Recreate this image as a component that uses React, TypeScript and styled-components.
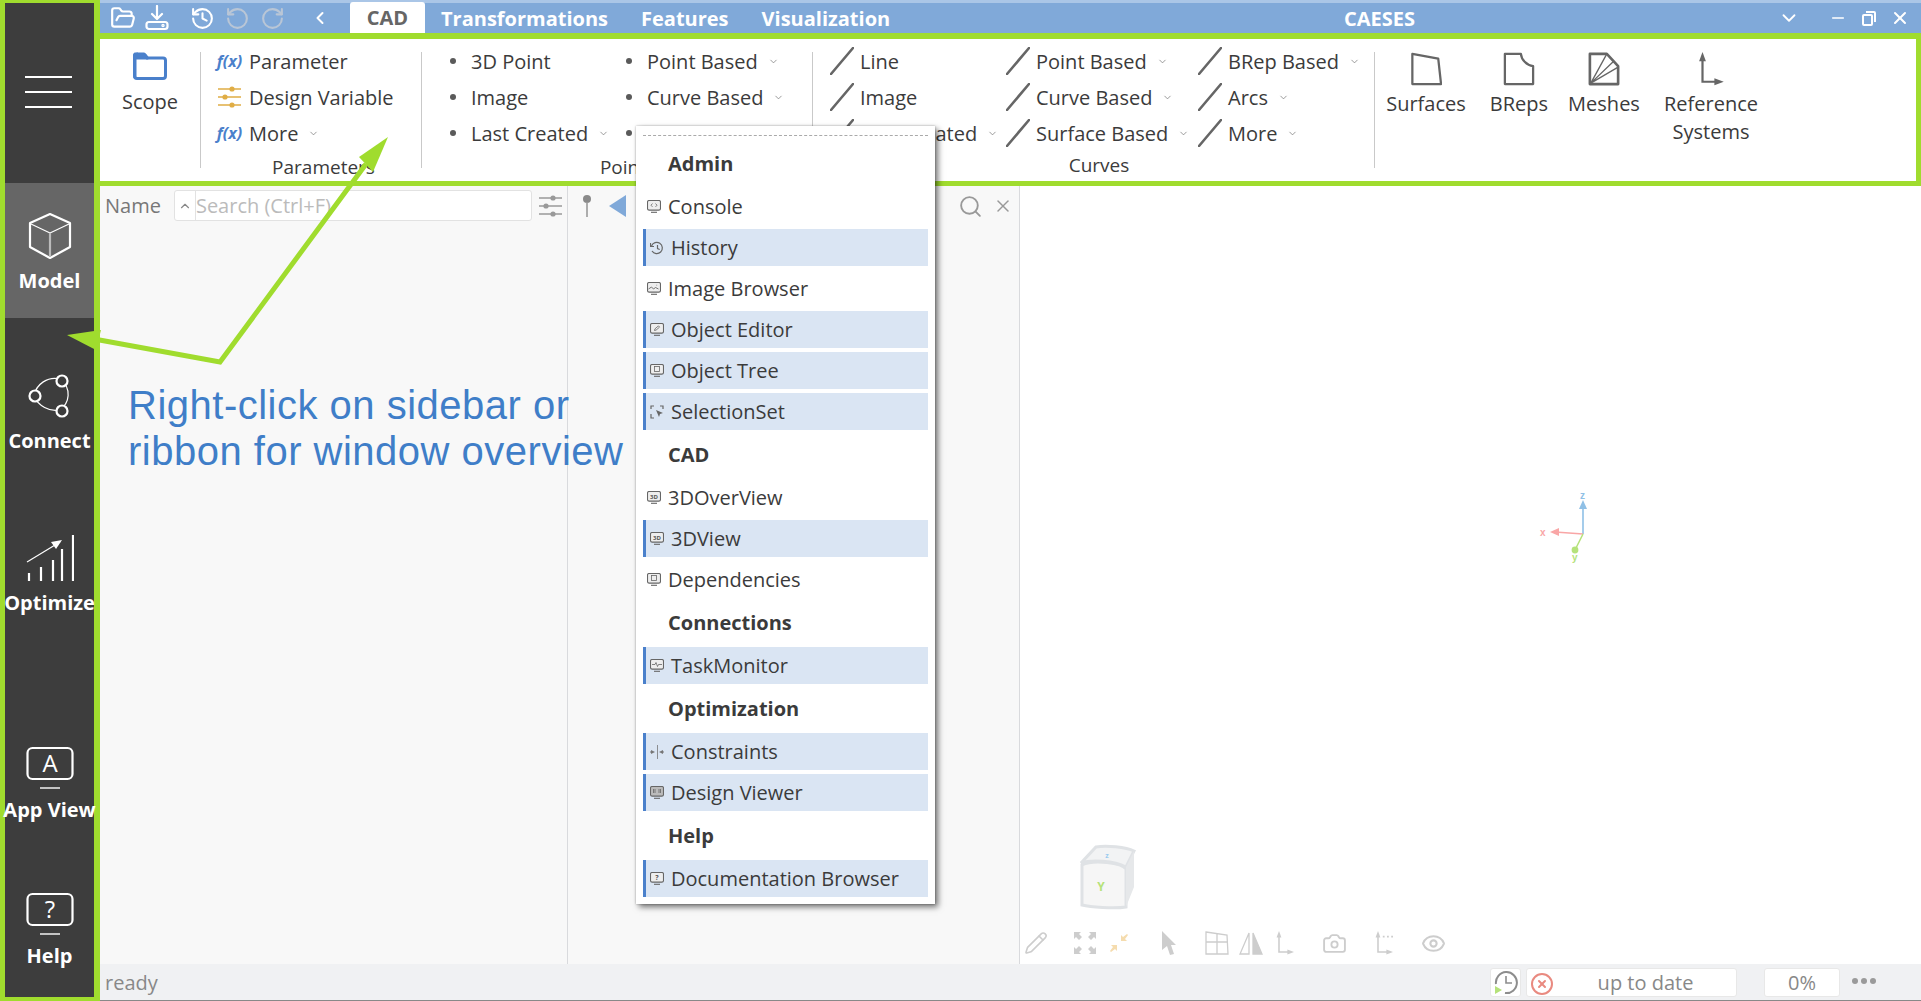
import React from 'react';
import styled, { createGlobalStyle } from 'styled-components';
import { Camera, ChevronDown, ChevronLeft, ChevronUp, CircleX, Eye, FolderOpen, History, Minus, Pencil, RotateCcw, RotateCw, Search, X } from 'lucide-react';

const GREEN = '#a0dc2e';
const BLUE = '#80a9d9';
const ACCENT = '#4a80cb';

const Global = createGlobalStyle`
  html, body { margin: 0; padding: 0; background: #fff; }
  body { font-family: "Open Sans", sans-serif; color: #3b3b3b; }
  * { box-sizing: border-box; }
`;

const Page = styled.div`
  position: relative;
  width: 1921px;
  height: 1001px;
  overflow: hidden;
  display: flex;
`;

const Sidebar = styled.nav`
  flex: 0 0 100px;
  width: 100px;
  min-width: 0;
  height: 1001px;
  background: #3d3d3d;
  border: solid ${GREEN};
  border-width: 3px 6px 4px 5px;
  display: flex;
  flex-direction: column;
`;

const Burger = styled.div`
  height: 180px;
  padding: 73px 0 0 20px;
  display: flex;
  flex-direction: column;
  gap: 13px;
  flex: none;
  & > i {
    display: block;
    width: 47px;
    height: 2px;
    background: #fff;
  }
`;

const NavItem = styled.div<{ $gap: number; $active?: boolean }>`
  display: flex;
  flex-direction: column;
  align-items: center;
  flex: none;
  width: 89px;
  margin-top: ${p => (p.$active ? 0 : p.$gap)}px;
  padding-top: ${p => (p.$active ? p.$gap : 0)}px;
  height: ${p => (p.$active ? '135px' : 'auto')};
  background: ${p => (p.$active ? '#666666' : 'transparent')};
  & > svg { flex: none; }
`;

const NavLabel = styled.div`
  margin-top: 9px;
  height: 24px;
  line-height: 24px;
  font-size: 20px;
  font-weight: 700;
  color: #fff;
  white-space: nowrap;
`;

const Main = styled.div`
  flex: 1;
  min-width: 0;
  display: flex;
  flex-direction: column;
`;

const TitleBar = styled.header`
  flex: 0 0 33px;
  background: ${BLUE};
  border-top: 3px solid #aac6e7;
  display: flex;
  align-items: center;
  color: #fff;
  position: relative;
`;

const QuickIcons = styled.div`
  display: flex;
  align-items: center;
  margin-left: 10px;
  width: 240px;
`;

const QuickSlot = styled.span<{ $left: number; $off?: boolean }>`
  display: flex;
  margin-left: ${p => p.$left}px;
  color: ${p => (p.$off ? '#b9c6d6' : '#fff')};
`;

const Tab = styled.div<{ $active?: boolean; $left: number }>`
  margin-left: ${p => p.$left}px;
  font-size: 20px;
  font-weight: 700;
  white-space: nowrap;
  ${p =>
    p.$active
      ? `background:#fff;color:#666;height:31px;margin-top:-1px;padding:0 10px;border-radius:3px 3px 0 0;line-height:31px;width:75px;text-align:center;`
      : `color:#fff;`}
`;

const AppName = styled.div`
  position: absolute;
  left: 1244px;
  font-size: 20px;
  font-weight: 700;
`;

const WindowButtons = styled.div`
  margin-left: auto;
  display: flex;
  align-items: center;
  color: #fff;
`;

const WinSlot = styled.span<{ $left: number }>`
  display: flex;
  margin-left: ${p => p.$left}px;
`;

const Ribbon = styled.section`
  flex: 0 0 153px;
  background: #fff;
  border: solid ${GREEN};
  border-width: 6px 5px 5px 0;
  display: flex;
`;

const Group = styled.div<{ $width: number }>`
  flex: 0 0 ${p => p.$width}px;
  display: flex;
  flex-direction: column;
  padding-top: 4px;
`;

const GroupRows = styled.div`
  height: 108px;
  display: flex;
`;

const Column = styled.div<{ $width: number; $left?: number }>`
  flex: 0 0 ${p => p.$width}px;
  margin-left: ${p => p.$left ?? 0}px;
  display: flex;
  flex-direction: column;
`;

const Row = styled.div`
  height: 36px;
  display: flex;
  align-items: center;
  font-size: 20px;
  white-space: nowrap;
`;

const RowIcon = styled.span<{ $width: number; $gap: number }>`
  flex: 0 0 ${p => p.$width}px;
  display: flex;
  align-items: center;
  justify-content: center;
  margin-right: ${p => p.$gap}px;
`;

const Fx = styled.span`
  font-family: "Open Sans", sans-serif;
  font-style: italic;
  font-weight: 700;
  font-size: 16px;
  color: ${ACCENT};
`;

const Caret = styled(ChevronDown)`
  margin-left: 10px;
  color: #777;
`;

const GroupLabel = styled.div<{ $shift?: number; $lift?: number }>`
  height: 30px;
  line-height: 32px;
  font-size: 19px;
  text-align: center;
  white-space: nowrap;
  padding-left: ${p => p.$shift ?? 0}px;
  margin-top: ${p => -(p.$lift ?? 0)}px;
`;

const Divider = styled.div`
  flex: 0 0 1px;
  height: 116px;
  margin-top: 13px;
  background: #c9c9c9;
`;

const ScopeButton = styled.div`
  flex: 0 0 100px;
  display: flex;
  flex-direction: column;
  align-items: center;
  padding: 13px 0 0 0;
  font-size: 20px;
  & > span { margin-top: 8px; line-height: 28px; }
`;

const BigButton = styled.div<{ $left: number; $width: number }>`
  flex: 0 0 ${p => p.$width}px;
  margin-left: ${p => p.$left}px;
  display: flex;
  flex-direction: column;
  align-items: center;
  padding-top: 13px;
  font-size: 20px;
  line-height: 28px;
  text-align: center;
  & > span { margin-top: 4px; }
`;

const Body = styled.div`
  flex: 1;
  min-height: 0;
  display: flex;
  background: #f8f8f8;
`;

const TreePanel = styled.div`
  flex: 0 0 462px;
  border-right: 1px solid #d9dadd;
  padding: 4px 4px 0 5px;
`;

const TreeHeader = styled.div`
  height: 31px;
  display: flex;
  align-items: center;
  color: #777;
  font-size: 20px;
`;

const SearchBox = styled.div`
  margin-left: 13px;
  width: 358px;
  height: 31px;
  background: #fff;
  border: 1px solid #e2e2e2;
  border-radius: 3px;
  display: flex;
  align-items: center;
`;

const SearchCaret = styled.div`
  flex: 0 0 21px;
  height: 100%;
  border-right: 1px solid #e2e2e2;
  display: flex;
  align-items: center;
  justify-content: center;
  color: #888;
`;

const Placeholder = styled.span`
  margin-left: 0;
  color: #bbb;
  font-size: 20px;
`;

const FilterIcon = styled.span`
  margin-left: 6px;
  flex: none;
  display: flex;
`;

const EditorPanel = styled.div`
  flex: 0 0 452px;
  border-right: 1px solid #d9dadd;
  height: 100%;
`;

const EditorHeader = styled.div`
  height: 40px;
  display: flex;
  align-items: center;
  padding-left: 14px;
  color: #999;
`;

const Triangle = styled.svg`
  margin-left: 17px;
`;

const CloseTools = styled.div`
  margin-left: auto;
  margin-right: 6px;
  display: flex;
  gap: 10px;
  align-items: center;
  color: #999;
`;

const Viewport = styled.div`
  flex: 1;
  background: #fff;
  position: relative;
  display: flex;
  align-items: flex-end;
`;

const Tools = styled.div`
  height: 42px;
  display: flex;
  align-items: center;
  color: #ccc;
`;

const ToolSlot = styled.span<{ $left: number; $color?: string }>`
  display: flex;
  margin-left: ${p => p.$left}px;
  color: ${p => p.$color ?? '#cdcdcd'};
`;

const CubeSvg = styled.svg`
  position: absolute;
  left: 55px;
  top: 657px;
`;

const AxesSvg = styled.svg`
  position: absolute;
  left: 515px;
  top: 300px;
`;

const StatusBar = styled.footer`
  flex: 0 0 37px;
  background: #f0f1f3;
  border-bottom: 1px solid #888;
  display: flex;
  align-items: center;
  padding-left: 5px;
  color: #888;
  font-size: 20px;
  position: relative;
`;

const StatusRight = styled.div`
  margin-left: auto;
  margin-right: 81px;
  display: flex;
  align-items: center;
`;

const StatusBox = styled.div<{ $width: number; $left: number; $pad?: number }>`
  width: ${p => p.$width}px;
  margin-left: ${p => p.$left}px;
  height: 29px;
  padding-left: ${p => p.$pad ?? 0}px;
  background: #fff;
  border: 1px solid #e8e8e8;
  border-radius: 3px;
  display: flex;
  align-items: center;
  justify-content: center;
  position: relative;
  & > .lead { position: absolute; left: 3px; top: 3px; }
`;

const Dots = styled.div`
  position: absolute;
  right: 45px;
  top: 14px;
  display: flex;
  gap: 3px;
  & > i { width: 6px; height: 6px; border-radius: 50%; background: #9a9a9a; display: block; }
`;

const Menu = styled.div`
  position: absolute;
  left: 636px;
  top: 126px;
  width: 299px;
  background: #fff;
  padding: 9px 7px 7px 7px;
  display: flex;
  flex-direction: column;
  gap: 4px;
  box-shadow: 3px 3px 6px rgba(0, 0, 0, 0.55), 0 0 2px rgba(0, 0, 0, 0.3);
  z-index: 5;
`;

const Tear = styled.div`
  height: 4px;
  border-top: 1px dashed #aaa;
`;

const MenuHeading = styled.div`
  height: 41px;
  line-height: 41px;
  padding-left: 25px;
  font-size: 20px;
  font-weight: 700;
  color: #3b3b3b;
`;

const MenuItem = styled.div<{ $active?: boolean }>`
  height: 37px;
  display: flex;
  align-items: center;
  gap: 7px;
  padding-left: 4px;
  font-size: 20px;
  color: #3b3b3b;
  white-space: nowrap;
  ${p => p.$active && `background:#dae5f3;border-left:3px solid ${ACCENT};`}
`;

const Note = styled.div`
  position: absolute;
  left: 128px;
  top: 382px;
  font-family: "Liberation Sans", Arial, sans-serif;
  font-size: 40px;
  line-height: 46px;
  letter-spacing: 0.5px;
  color: #3f7ec8;
  z-index: 3;
  white-space: nowrap;
`;

const Overlay = styled.svg`
  position: absolute;
  left: 0;
  top: 0;
  pointer-events: none;
  z-index: 4;
`;

const Slash = () => (
  <svg width="24" height="28" viewBox="0 0 24 28">
    <path d="M1 27 L23 1" stroke="#666" strokeWidth="2.6" strokeLinecap="round" />
  </svg>
);

const Dot = () => (
  <svg width="8" height="8" viewBox="0 0 8 8">
    <circle cx="4" cy="4" r="3" fill="#5a5a5a" />
  </svg>
);

const Sliders = ({ color }: { color: string }) => (
  <svg width="25" height="24" viewBox="0 0 25 24" fill={color} stroke={color}>
    <path d="M1 4h23M1 12h23M1 20h23" strokeWidth="1.6" />
    <circle cx="15" cy="4" r="2.6" stroke="none" />
    <circle cx="8" cy="12" r="2.6" stroke="none" />
    <circle cx="15" cy="20" r="2.6" stroke="none" />
  </svg>
);

const DownloadIcon = () => (
  <svg width="24" height="26" viewBox="0 0 24 26" fill="none" stroke="#fff" strokeWidth="2.2" strokeLinecap="round" strokeLinejoin="round">
    <path d="M12 1v12M7 9l5 5 5-5" />
    <rect x="1.5" y="17" width="21" height="7" rx="2.5" />
    <circle cx="18" cy="20.5" r="0.6" fill="#fff" />
  </svg>
);

const RestoreIcon = () => (
  <svg width="14" height="16" viewBox="0 0 14 16" fill="none" stroke="#fff" strokeWidth="2">
    <rect x="1" y="5" width="9" height="10" rx="1" />
    <path d="M4 2h8a1 1 0 0 1 1 1v9" />
  </svg>
);

const FolderIcon = () => (
  <svg width="34" height="28" viewBox="0 0 34 28" fill="none" stroke={ACCENT} strokeWidth="3" strokeLinejoin="round">
    <path d="M2 26V5a3 3 0 0 1 3-3h0" />
    <path d="M2 2h9l3 4h16a2.5 2.5 0 0 1 2.5 2.5V24a2.5 2.5 0 0 1-2.5 2.5H4A2.5 2.5 0 0 1 1.5 24V3z" />
    <path d="M2 3h10l2.4 3H2z" fill={ACCENT} stroke={ACCENT} />
  </svg>
);

const SurfaceIcon = () => (
  <svg width="32" height="34" viewBox="0 0 34 36" fill="none" stroke="#666" strokeWidth="2.4" strokeLinejoin="round">
    <path d="M2.5 2 L30 7 L33 34 H2.5 Z" />
  </svg>
);

const BRepIcon = () => (
  <svg width="32" height="34" viewBox="0 0 34 36" fill="none" stroke="#666" strokeWidth="2.4" strokeLinejoin="round">
    <path d="M2 2 H19 C19.5 8 25 14 32 15 V34 H2 Z" />
  </svg>
);

const MeshIcon = () => (
  <svg width="32" height="34" viewBox="0 0 34 36" fill="none" stroke="#666" strokeLinejoin="round">
    <path d="M2 2 H20 L32 15 V34 H2 Z" strokeWidth="2.8" />
    <path d="M3 33 L20 2 M3 33 L27 10 M3 33 L32 16" strokeWidth="1.4" />
  </svg>
);

const AxesIcon = ({ color, w, h, sw, dots }: { color: string; w: number; h: number; sw: number; dots?: boolean }) => (
  <svg width={w} height={h} viewBox="0 0 30 40" fill={color} stroke={color}>
    <path d="M5 6 V35 H20" fill="none" strokeWidth={sw} />
    <path d="M5 0 L9 11 H1 Z" stroke="none" />
    <path d="M30 35 L19 31 V39 Z" stroke="none" />
    {dots && <path d="M13 8h3v3h-3zM20 8h3v3h-3zM27 8h3v3h-3z" stroke="none" />}
  </svg>
);

const CubeNav = () => (
  <svg width="48" height="48" viewBox="0 0 48 48" fill="none" stroke="#fff" strokeWidth="2.2" strokeLinejoin="round">
    <path d="M24 2 L44 11 V35 L24 46 L4 35 V11 Z" />
    <path d="M5 12 L24 21 L43 12" strokeWidth="1.2" />
    <path d="M24 21 V45" stroke="#bbb" strokeWidth="2.2" />
  </svg>
);

const ConnectNav = () => (
  <svg width="48" height="48" viewBox="0 0 48 48" fill="none" stroke="#fff">
    <path d="M34 7 C22 4 10 12 8 24 C12 34 24 40 33 38 C44 32 46 16 34 7" strokeWidth="1.2" />
    <circle cx="36" cy="9" r="5.5" fill="#3d3d3d" strokeWidth="2.2" />
    <circle cx="9" cy="24" r="5.5" fill="#3d3d3d" strokeWidth="2.2" />
    <circle cx="36" cy="39" r="5.5" fill="#3d3d3d" strokeWidth="2.2" />
  </svg>
);

const OptimizeNav = () => (
  <svg width="48" height="48" viewBox="0 0 48 48" fill="none" stroke="#fff" strokeWidth="2.2">
    <path d="M3 47V39M15 47V33M27 47V26M36 47V15M47 47V1" />
    <path d="M1 28 L34 8" strokeWidth="1.2" />
    <path d="M36 6 L25 8 L30 15 Z" fill="#fff" stroke="none" />
  </svg>
);

const ScreenNav = ({ glyph }: { glyph: string }) => (
  <svg width="48" height="48" viewBox="0 0 48 48" fill="none" stroke="#fff">
    <rect x="1.5" y="7" width="45" height="31" rx="5" strokeWidth="2.2" />
    <path d="M14 47 H34" strokeWidth="1.4" />
    <text x="24" y="31" textAnchor="middle" fontFamily="Open Sans, sans-serif" fontWeight="400" fontSize="24" fill="#fff" stroke="none">{glyph}</text>
  </svg>
);

type MenuGlyph = 'code' | 'hist' | 'img' | 'edit' | 'box' | 'sel' | '3d' | 'pulse' | 'cons' | 'design' | 'help';

const MenuIcon = ({ kind }: { kind: MenuGlyph }) => {
  if (kind === 'hist') {
    return (
      <svg width="14" height="14" viewBox="0 0 14 14" fill="none" stroke="#666" strokeWidth="1.2" style={{ flex: 'none' }}>
        <path d="M1.5 5A5.6 5.6 0 1 1 2 10" />
        <path d="M0.5 2v3.5h3.5" />
        <path d="M7.5 4v3.5l2.2 1" />
      </svg>
    );
  }
  if (kind === 'sel') {
    return (
      <svg width="14" height="14" viewBox="0 0 14 14" fill="none" stroke="#666" strokeWidth="1.2" style={{ flex: 'none' }}>
        <path d="M1 4V1h3M10 1h3v3M1 9v4h3" />
        <path d="M6 5l7 3-3 1-1 3z" fill="#666" stroke="none" />
      </svg>
    );
  }
  if (kind === 'cons') {
    return (
      <svg width="14" height="14" viewBox="0 0 14 14" fill="#777" stroke="none" style={{ flex: 'none' }}>
        <path d="M7 0h.8v14H7zM0 6.5h1v1H0zM13 6.5h1v1h-1z" />
        <path d="M5 7L1 5v4zM9 7l4-2v4z" />
      </svg>
    );
  }
  return (
    <svg width="14" height="13" viewBox="0 0 14 13" fill="none" stroke="#666" strokeWidth="1.1" style={{ flex: 'none' }}>
      <rect x="0.5" y="0.5" width="13" height="9.6" rx="1.6" fill={kind === 'design' ? '#bbb' : '#eee'} />
      <path d="M4 12.3h6" />
      {kind === 'code' && <path d="M5.5 3.5L4 5.2l1.5 1.7M8.5 3.5L10 5.2 8.5 6.9" strokeWidth="0.8" />}
      {kind === 'img' && <path d="M1.5 7l3-2 2 2 2-1.5 3 1.5M9.5 3.2h.6" strokeWidth="0.9" />}
      {kind === 'edit' && <path d="M4.5 7.5l.4-1.6 3.5-3 1.2 1.2-3.5 3z" strokeWidth="0.8" />}
      {kind === 'box' && <rect x="4.5" y="2.5" width="5" height="5" strokeWidth="0.8" />}
      {kind === '3d' && <text x="7" y="7.6" textAnchor="middle" fontSize="6" fontWeight="700" fontFamily="Open Sans, sans-serif" fill="#555" stroke="none">3D</text>}
      {kind === 'pulse' && <path d="M2 5.5h3l1-2 1.5 4 1-2H12" strokeWidth="0.8" />}
      {kind === 'design' && <path d="M3.5 3v4M5 3v4M9 3v4M10.5 3v4" strokeWidth="0.8" />}
      {kind === 'help' && <text x="7" y="7.8" textAnchor="middle" fontSize="7" fontWeight="700" fontFamily="Open Sans, sans-serif" fill="#555" stroke="none">?</text>}
    </svg>
  );
};

type MenuEntry = { heading?: boolean; label: string; active?: boolean; icon?: MenuGlyph };

const menuEntries: MenuEntry[] = [
  { heading: true, label: 'Admin' },
  { label: 'Console', icon: 'code' },
  { label: 'History', icon: 'hist', active: true },
  { label: 'Image Browser', icon: 'img' },
  { label: 'Object Editor', icon: 'edit', active: true },
  { label: 'Object Tree', icon: 'box', active: true },
  { label: 'SelectionSet', icon: 'sel', active: true },
  { heading: true, label: 'CAD' },
  { label: '3DOverView', icon: '3d' },
  { label: '3DView', icon: '3d', active: true },
  { label: 'Dependencies', icon: 'box' },
  { heading: true, label: 'Connections' },
  { label: 'TaskMonitor', icon: 'pulse', active: true },
  { heading: true, label: 'Optimization' },
  { label: 'Constraints', icon: 'cons', active: true },
  { label: 'Design Viewer', icon: 'design', active: true },
  { heading: true, label: 'Help' },
  { label: 'Documentation Browser', icon: 'help', active: true },
];

const RibbonRow = ({ icon, width, gap = 6, label, more }: { icon: React.ReactNode; width: number; gap?: number; label: string; more?: boolean }) => (
  <Row>
    <RowIcon $width={width} $gap={gap}>{icon}</RowIcon>
    {label}
    {more && <Caret size={11} strokeWidth={1.6} />}
  </Row>
);

const App = () => {
  return (
    <Page>
      <Global />
      <Sidebar>
        <Burger><i /><i /><i /></Burger>
        <NavItem $gap={29} $active><CubeNav /><NavLabel>Model</NavLabel></NavItem>
        <NavItem $gap={54}><ConnectNav /><NavLabel>Connect</NavLabel></NavItem>
        <NavItem $gap={81}><OptimizeNav /><NavLabel>Optimize</NavLabel></NavItem>
        <NavItem $gap={126}><ScreenNav glyph="A" /><NavLabel>App View</NavLabel></NavItem>
        <NavItem $gap={65}><ScreenNav glyph="?" /><NavLabel>Help</NavLabel></NavItem>
      </Sidebar>

      <Main>
        <TitleBar>
          <QuickIcons>
            <QuickSlot $left={0}><FolderOpen size={26} strokeWidth={2} /></QuickSlot>
            <QuickSlot $left={9}><DownloadIcon /></QuickSlot>
            <QuickSlot $left={21}><History size={25} strokeWidth={2} /></QuickSlot>
            <QuickSlot $left={10} $off><RotateCcw size={25} strokeWidth={2} /></QuickSlot>
            <QuickSlot $left={10} $off><RotateCw size={25} strokeWidth={2} /></QuickSlot>
            <QuickSlot $left={25}><ChevronLeft size={20} strokeWidth={2.4} /></QuickSlot>
          </QuickIcons>
          <Tab $active $left={0}>CAD</Tab>
          <Tab $left={16}>Transformations</Tab>
          <Tab $left={33}>Features</Tab>
          <Tab $left={33}>Visualization</Tab>
          <AppName>CAESES</AppName>
          <WindowButtons>
            <WinSlot $left={0}><ChevronDown size={22} strokeWidth={2} /></WinSlot>
            <WinSlot $left={29}><Minus size={18} strokeWidth={2.2} /></WinSlot>
            <WinSlot $left={15}><RestoreIcon /></WinSlot>
            <WinSlot $left={14}><X size={20} strokeWidth={2.4} /></WinSlot>
            <WinSlot $left={11} />
          </WindowButtons>
        </TitleBar>

        <Ribbon>
          <ScopeButton><FolderIcon /><span>Scope</span></ScopeButton>
          <Divider />
          <Group $width={218}>
            <GroupRows>
              <Column $width={205} $left={15}>
                <RibbonRow width={27} icon={<Fx>f(x)</Fx>} label="Parameter" />
                <RibbonRow width={27} icon={<Sliders color="#e0ad45" />} label="Design Variable" />
                <RibbonRow width={27} icon={<Fx>f(x)</Fx>} label="More" more />
              </Column>
            </GroupRows>
            <GroupLabel $shift={25}>Parameters</GroupLabel>
          </Group>
          <Divider />
          <Group $width={390}>
            <GroupRows>
              <Column $width={176} $left={27}>
                <RibbonRow width={8} gap={14} icon={<Dot />} label="3D Point" />
                <RibbonRow width={8} gap={14} icon={<Dot />} label="Image" />
                <RibbonRow width={8} gap={14} icon={<Dot />} label="Last Created" more />
              </Column>
              <Column $width={160}>
                <RibbonRow width={8} gap={14} icon={<Dot />} label="Point Based" more />
                <RibbonRow width={8} gap={14} icon={<Dot />} label="Curve Based" more />
                <RibbonRow width={8} gap={14} icon={<Dot />} label="Surface Based" more />
              </Column>
            </GroupRows>
            <GroupLabel $shift={21}>Points</GroupLabel>
          </Group>
          <Divider />
          <Group $width={561}>
            <GroupRows>
              <Column $width={176} $left={17}>
                <RibbonRow width={24} icon={<Slash />} label="Line" />
                <RibbonRow width={24} icon={<Slash />} label="Image" />
                <RibbonRow width={24} icon={<Slash />} label="Last Created" more />
              </Column>
              <Column $width={192}>
                <RibbonRow width={24} icon={<Slash />} label="Point Based" more />
                <RibbonRow width={24} icon={<Slash />} label="Curve Based" more />
                <RibbonRow width={24} icon={<Slash />} label="Surface Based" more />
              </Column>
              <Column $width={170}>
                <RibbonRow width={24} icon={<Slash />} label="BRep Based" more />
                <RibbonRow width={24} icon={<Slash />} label="Arcs" more />
                <RibbonRow width={24} icon={<Slash />} label="More" more />
              </Column>
            </GroupRows>
            <GroupLabel $lift={2} $shift={11}>Curves</GroupLabel>
          </Group>
          <Divider />
          <BigButton $left={11} $width={80}><SurfaceIcon /><span>Surfaces</span></BigButton>
          <BigButton $left={22} $width={62}><BRepIcon /><span>BReps</span></BigButton>
          <BigButton $left={16} $width={76}><MeshIcon /><span>Meshes</span></BigButton>
          <BigButton $left={19} $width={100}>
            <AxesIcon color="#666" w={30} h={34} sw={2.6} />
            <span>Reference<br />Systems</span>
          </BigButton>
        </Ribbon>

        <Body>
          <TreePanel>
            <TreeHeader>
              Name
              <SearchBox>
                <SearchCaret><ChevronUp size={14} strokeWidth={2} /></SearchCaret>
                <Placeholder>Search (Ctrl+F)</Placeholder>
              </SearchBox>
              <FilterIcon><Sliders color="#999" /></FilterIcon>
            </TreeHeader>
          </TreePanel>
          <EditorPanel>
            <EditorHeader>
              <svg width="10" height="24" viewBox="0 0 10 24">
                <circle cx="5" cy="5" r="4" fill="#8a8a8a" />
                <path d="M5 8v15" stroke="#9a9a9a" strokeWidth="1.6" />
              </svg>
              <Triangle width="17" height="24" viewBox="0 0 17 24">
                <path d="M0 12 L17 1 V23 Z" fill={BLUE} />
              </Triangle>
              <CloseTools>
                <Search size={25} strokeWidth={1.8} />
                <X size={20} strokeWidth={1.8} />
              </CloseTools>
            </EditorHeader>
          </EditorPanel>
          <Viewport>
            <AxesSvg width="60" height="80" viewBox="0 0 60 80" fontFamily="Liberation Sans, sans-serif" fontWeight="700" fontSize="10">
              <path d="M48 48 V20" stroke="#8fc0e6" strokeWidth="1.6" />
              <path d="M48 14 L52 23 H44 Z" fill="#8fc0e6" />
              <text x="45" y="13" fill="#8fc0e6">z</text>
              <path d="M48 48 L20 46" stroke="#f9a6a6" strokeWidth="1.6" />
              <path d="M15 46 L24 42 V50 Z" fill="#f9a6a6" />
              <text x="5" y="50" fill="#f9a6a6">x</text>
              <path d="M48 48 L41 62" stroke="#b5e27a" strokeWidth="1.6" />
              <circle cx="40" cy="64" r="3.4" fill="#b5e27a" />
              <text x="37" y="75" fill="#b5e27a">y</text>
            </AxesSvg>
            <CubeSvg width="64" height="68" viewBox="0 0 62 68" fill="none">
              <path d="M6 22 C18 16 46 20 50 26 L50 64 C38 66 14 64 6 62 Z" fill="#f6f6f6" stroke="#dfe2e5" strokeWidth="3" />
              <path d="M5 20 L20 4 C30 2 50 4 58 8 L50 24 C38 18 16 16 5 20 Z" fill="#f2f3f4" stroke="#dfe2e5" strokeWidth="3" />
              <path d="M58 8 V44 L50 64 V24 Z" fill="#e6e8ea" />
              <text x="31" y="15" textAnchor="middle" fontFamily="Open Sans, sans-serif" fontSize="7" fontWeight="700" fill="#9ccbef">z</text>
              <text x="25" y="48" textAnchor="middle" fontFamily="Open Sans, sans-serif" fontSize="12" fontWeight="700" fill="#b5e27a">Y</text>
            </CubeSvg>
            <Tools>
              <ToolSlot $left={4}><Pencil size={24} strokeWidth={1.6} /></ToolSlot>
              <ToolSlot $left={26}>
                <svg width="22" height="22" viewBox="0 0 22 22" fill="currentColor">
                  <path d="M0 0h7l-2 2 3 3-3 3-3-3-2 2zM22 0h-7l2 2-3 3 3 3 3-3 2 2zM0 22h7l-2-2 3-3-3-3-3 3-2-2zM22 22h-7l2-2-3-3 3-3 3 3 2-2z" />
                </svg>
              </ToolSlot>
              <ToolSlot $left={13} $color="#f5dcae">
                <svg width="20" height="20" viewBox="0 0 20 20" fill="currentColor">
                  <path d="M12 8V2l2 2 4-3 1 1-3 4 2 2zM8 12v6l-2-2-4 3-1-1 3-4-2-2z" />
                </svg>
              </ToolSlot>
              <ToolSlot $left={33}>
                <svg width="14" height="24" viewBox="0 0 14 24" fill="currentColor">
                  <path d="M0 0 L14 14 L9 14 L12 23 L8 24 L5 15 L0 19 Z" />
                </svg>
              </ToolSlot>
              <ToolSlot $left={29}>
                <svg width="24" height="24" viewBox="0 0 24 24" fill="none" stroke="currentColor" strokeWidth="1.3">
                  <path d="M1 1 L22 4 L23 23 H1 Z M1 11 H23 M12 3 V23" />
                </svg>
              </ToolSlot>
              <ToolSlot $left={10}>
                <svg width="24" height="24" viewBox="0 0 24 24" fill="none" stroke="currentColor" strokeWidth="1.3">
                  <path d="M10 2 L1 23 H10 Z" />
                  <path d="M14 2 L23 23 H14 Z" fill="currentColor" />
                </svg>
              </ToolSlot>
              <ToolSlot $left={11}><AxesIcon color="currentColor" w={22} h={24} sw={2.6} /></ToolSlot>
              <ToolSlot $left={26}><Camera size={25} strokeWidth={1.8} /></ToolSlot>
              <ToolSlot $left={26}><AxesIcon color="currentColor" w={22} h={24} sw={2.6} dots /></ToolSlot>
              <ToolSlot $left={26}><Eye size={25} strokeWidth={2} /></ToolSlot>
            </Tools>
          </Viewport>
        </Body>

        <StatusBar>
          ready
          <StatusRight>
            <StatusBox $width={31} $left={0}>
              <svg width="25" height="25" viewBox="0 0 25 25" fill="none" stroke="#8d8d8d" strokeWidth="2">
                <path d="M3 14A10.5 10.5 0 1 1 12 23" />
                <path d="M13 6v7h6" strokeWidth="1.6" />
                <path d="M2 16l7 4-7 4z" fill="#b5e27a" stroke="none" />
              </svg>
            </StatusBox>
            <StatusBox $width={211} $left={5} $pad={28}>
              <CircleX className="lead" size={24} strokeWidth={2} color="#e98a80" />
              up to date
            </StatusBox>
            <StatusBox $width={76} $left={27}>0%</StatusBox>
          </StatusRight>
          <Dots><i /><i /><i /></Dots>
        </StatusBar>
      </Main>

      <Note>Right-click on sidebar or<br />ribbon for window overview</Note>

      <Menu>
        <Tear />
        {menuEntries.map(entry =>
          entry.heading ? (
            <MenuHeading key={entry.label}>{entry.label}</MenuHeading>
          ) : (
            <MenuItem key={entry.label} $active={entry.active}>
              {entry.icon && <MenuIcon kind={entry.icon} />}
              {entry.label}
            </MenuItem>
          )
        )}
      </Menu>

      <Overlay width="1921" height="1001" viewBox="0 0 1921 1001">
        <path d="M366 164 L220 362 L94 339" fill="none" stroke={GREEN} strokeWidth="5" />
        <path d="M388 137 L359 157 L373 172 Z" fill={GREEN} />
        <path d="M67 335 L101 330 L96 350 Z" fill={GREEN} />
      </Overlay>
    </Page>
  );
};

export default App;
